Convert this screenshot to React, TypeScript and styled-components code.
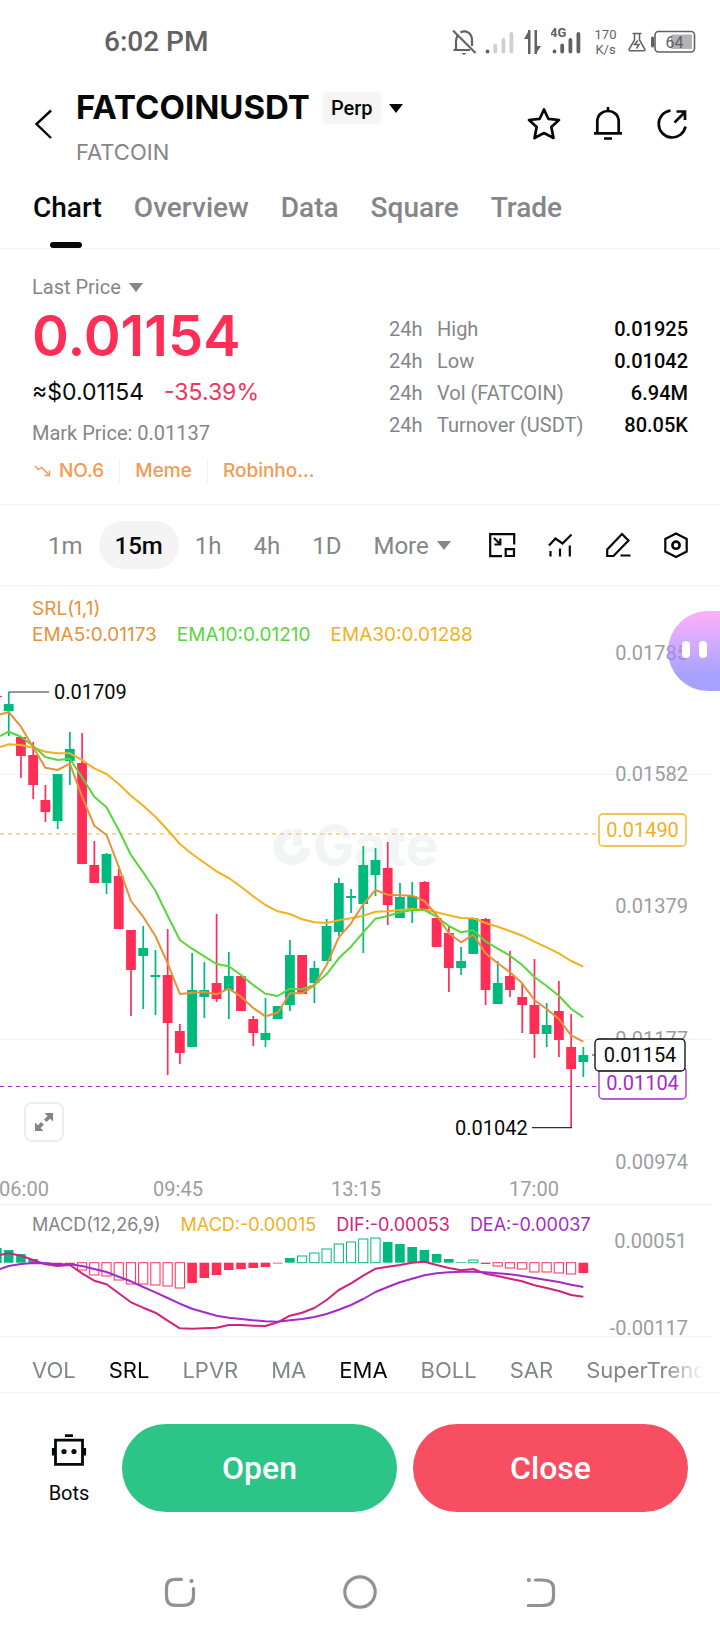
import React from "react";
import styled, { createGlobalStyle } from "styled-components";

const INK = "#070808";
const GREY = "#84868a";
const AXIS = "#9b9ea1";
const LINE = "#f0f1f2";
const RED = "#ff2e57";
const GREEN = "#00b97c";
const ORANGE = "#e8913a";
const LIME = "#58d63a";
const AMBER = "#f3b01f";
const PINK = "#d3227c";
const PURPLE = "#a52bc8";
const BRAND = 'Inter, "Liberation Sans", sans-serif';
const SYSTEM = 'Roboto, "Liberation Sans", sans-serif';

const GlobalStyle = createGlobalStyle`
  * { box-sizing: border-box; }
  body { margin: 0; background: #fff; color: ${INK}; font-family: ${SYSTEM}; }
  button { border: 0; padding: 0; background: none; color: inherit; font: inherit; cursor: pointer; }
  svg { display: block; }
`;

const Page = styled.div`
  display: flex;
  flex-direction: column;
  min-height: 100vh;
  overflow-x: hidden;
`;

/* status bar */
const StatusBar = styled.div`
  display: flex;
  align-items: center;
  justify-content: space-between;
  height: 80px;
  padding: 3px 24px 0 104px;
  color: #626262;
`;
const Clock = styled.span`
  font-size: 28px;
  font-weight: 500;
  line-height: 32px;
`;
const StatusIcons = styled.div<{ $gap: number }>`
  display: flex;
  align-items: center;
  gap: ${(p) => p.$gap}px;
`;
const Speed = styled.span`
  width: 29px;
  font-size: 13px;
  line-height: 15px;
  text-align: center;
`;

/* header */
const Header = styled.header`
  display: flex;
  align-items: center;
  height: 88px;
  padding: 0 30px 0 32px;
`;
const BackButton = styled.button`
  width: 44px;
  flex: none;
`;
const Heading = styled.div`
  flex: 1;
`;
const TitleRow = styled.div`
  display: flex;
  align-items: center;
  height: 48px;
  margin-bottom: 8px;
`;
const Title = styled.h1`
  margin: 0 13px 0 0;
  padding-bottom: 2px;
  font-family: ${BRAND};
  font-size: 33px;
  font-weight: 700;
  line-height: 46px;
`;
const Badge = styled.span`
  padding: 0 8px;
  border-radius: 4px;
  background: #f5f5f5;
  font-size: 20px;
  font-weight: 500;
  line-height: 32px;
`;
const Caret = styled.span<{ $color: string }>`
  display: inline-block;
  margin-left: 8px;
  border: 7px solid transparent;
  border-top: 9px solid ${(p) => p.$color};
  border-bottom: 0;
`;
const Subtitle = styled.div`
  color: ${GREY};
  font-family: ${BRAND};
  font-size: 22px;
  line-height: 24px;
`;
const HeaderActions = styled.div`
  display: flex;
  gap: 28px;
`;

/* tabs */
const Tabs = styled.nav`
  display: flex;
  gap: 32px;
  padding: 0 33px;
  border-bottom: 1px solid ${LINE};
`;
const Tab = styled.button<{ $active?: boolean }>`
  position: relative;
  height: 80px;
  padding-bottom: 2px;
  color: ${(p) => (p.$active ? INK : GREY)};
  font-size: 28px;
  font-weight: 500;
  &::after {
    content: "";
    display: ${(p) => (p.$active ? "block" : "none")};
    position: absolute;
    left: calc(50% - 17px);
    bottom: 0;
    width: 32px;
    height: 6px;
    border-radius: 3px;
    background: ${INK};
  }
`;

/* price summary */
const Summary = styled.section`
  display: flex;
  align-items: center;
  justify-content: space-between;
  padding: 26px 32px 21px;
  border-bottom: 1px solid ${LINE};
`;
const PriceKind = styled.button`
  display: flex;
  align-items: center;
  margin-bottom: 4px;
  color: ${GREY};
  font-size: 20px;
  line-height: 24px;
`;
const BigPrice = styled.div`
  margin-bottom: 8px;
  color: ${RED};
  font-family: ${BRAND};
  font-size: 56px;
  font-weight: 600;
  line-height: 66px;
`;
const PriceMeta = styled.div`
  display: flex;
  gap: 20px;
  margin-bottom: 10px;
  font-family: ${BRAND};
  font-size: 23px;
  line-height: 30px;
`;
const Change = styled.span`
  color: #ee3560;
`;
const MarkPrice = styled.div`
  margin-bottom: 12px;
  padding-top: 2px;
  color: ${GREY};
  font-size: 20px;
  line-height: 28px;
`;
const Tags = styled.div`
  display: flex;
  align-items: center;
  color: #f49a52;
  font-family: ${BRAND};
  font-size: 19px;
  font-weight: 500;
  line-height: 24px;
`;
const Tag = styled.a`
  display: flex;
  align-items: center;
  gap: 7px;
  color: inherit;
  text-decoration: none;
  & + & {
    margin-left: 15px;
    padding-left: 15px;
    border-left: 1px solid ${LINE};
  }
`;
const Stats = styled.table`
  width: 299px;
  margin-bottom: 4px;
  border-collapse: collapse;
  font-size: 20px;
  line-height: 32px;
`;
const StatHead = styled.th`
  padding: 0;
  color: ${GREY};
  font-weight: 400;
  text-align: left;
`;
const Period = styled.span`
  display: inline-block;
  width: 48px;
`;
const StatValue = styled.td`
  padding: 0;
  font-weight: 500;
  text-align: right;
`;

/* timeframes and chart tools */
const Toolbar = styled.div`
  display: flex;
  align-items: center;
  justify-content: space-between;
  height: 81px;
  padding: 0 30px 0 32px;
  border-bottom: 1px solid ${LINE};
`;
const Frames = styled.div`
  display: flex;
`;
const Frame = styled.button<{ $active?: boolean }>`
  display: flex;
  align-items: center;
  height: 48px;
  padding: 1px 16px 0;
  border-radius: 24px;
  background: ${(p) => (p.$active ? "#f4f4f4" : "none")};
  color: ${(p) => (p.$active ? INK : GREY)};
  font-size: 24px;
  font-weight: ${(p) => (p.$active ? 500 : 400)};
`;
const Tools = styled.div`
  display: flex;
  gap: 30px;
`;

/* charts */
const Pane = styled.section`
  position: relative;
`;
const Legend = styled.div<{ $top: number; $size: number }>`
  padding: ${(p) => p.$top}px 32px 0;
  font-family: ${BRAND};
  font-size: ${(p) => p.$size}px;
  line-height: 26px;
`;
const LegendRow = styled.div`
  display: flex;
  gap: 20px;
  white-space: nowrap;
`;
const LegendItem = styled.span<{ $color: string }>`
  color: ${(p) => p.$color};
`;
const Plot = styled.svg`
  width: 100%;
  height: auto;
  overflow: visible;
  font-family: ${SYSTEM};
  font-size: 20px;
`;
const ExpandButton = styled.button`
  position: absolute;
  left: 24px;
  bottom: 63px;
  display: grid;
  place-items: center;
  width: 40px;
  height: 40px;
  border: 2px solid #eeeeee;
  border-radius: 8px;
  background: #fff;
`;
const Assistant = styled.button`
  position: absolute;
  top: 25px;
  right: 0;
  display: flex;
  align-items: center;
  gap: 9px;
  width: 52px;
  height: 80px;
  padding: 0 0 3px 14px;
  border-radius: 40px 0 0 40px;
  background: linear-gradient(rgba(255, 142, 245, 0.7), rgba(186, 134, 255, 0.7) 45%, rgba(128, 122, 255, 0.7) 80%);
`;
const Eye = styled.span`
  width: 8px;
  height: 17px;
  border-radius: 4px;
  background: #fff;
`;

/* indicator picker */
const PickerFrame = styled.div`
  border-bottom: 1px solid ${LINE};
`;
const Indicators = styled.div`
  display: flex;
  gap: 33px;
  height: 55px;
  padding: 10px 0 0 32px;
  overflow: hidden;
  mask-image: linear-gradient(to right, #000 calc(100% - 56px), transparent calc(100% - 16px));
`;
const Indicator = styled.button<{ $active?: boolean }>`
  flex: none;
  color: ${(p) => (p.$active ? INK : GREY)};
  font-family: ${BRAND};
  font-size: 22px;
`;

/* order actions */
const Actions = styled.div`
  display: flex;
  gap: 16px;
  padding: 31px 32px 0 16px;
`;
const Bots = styled.button`
  display: flex;
  flex-direction: column;
  align-items: center;
  gap: 12px;
  width: 106px;
  margin-right: -16px;
  padding-top: 9px;
  font-size: 20px;
  line-height: 28px;
`;
const OrderButton = styled.button<{ $color: string }>`
  flex: 1;
  height: 88px;
  border-radius: 44px;
  background: ${(p) => p.$color};
  color: #fff;
  font-size: 32px;
  font-weight: 500;
`;
const SystemNav = styled.nav`
  display: grid;
  grid-template-columns: repeat(3, 1fr);
  place-items: center;
  margin-top: 56px;
  padding: 0 12.5%;
  height: 48px;
`;

/* chart data */
const X0 = 8.7;
const STEP = 12.226;
const cx = (i: number) => X0 + STEP * i;

type Candle = [0 | 1, number, number, number, number];
const candles: Candle[] = [
  [1, 692, 704, 711, 736], [0, 737, 737, 756, 778], [0, 742, 755, 785, 799], [0, 785, 800, 812, 822],
  [1, 774, 774, 821, 829], [1, 732, 749, 761, 785], [0, 733, 763, 864, 864], [0, 841, 865, 883, 883],
  [1, 853, 854, 883, 894], [0, 869, 876, 929, 929], [0, 930, 930, 970, 1016], [1, 926, 948, 956, 1009],
  [1, 950, 975, 977, 1015], [0, 929, 975, 1023, 1075], [0, 1024, 1031, 1053, 1064], [1, 953, 990, 1047, 1047],
  [1, 962, 990, 997, 1018], [0, 914, 983, 999, 1002], [1, 952, 976, 990, 1019], [0, 976, 976, 1011, 1011],
  [0, 1016, 1019, 1033, 1046], [1, 998, 1033, 1040, 1047], [1, 1006, 1006, 1019, 1019], [1, 940, 955, 1005, 1011],
  [0, 955, 955, 994, 994], [1, 961, 968, 983, 1003], [1, 919, 926, 961, 961], [1, 878, 883, 932, 936],
  [1, 889, 896, 898, 913], [1, 846, 865, 904, 953], [1, 848, 860, 875, 896], [0, 842, 868, 905, 925],
  [1, 883, 897, 918, 918], [1, 882, 896, 909, 923], [0, 881, 882, 909, 909], [0, 918, 918, 947, 947],
  [0, 926, 933, 968, 992], [1, 947, 961, 968, 975], [1, 918, 918, 954, 954], [0, 918, 919, 990, 1005],
  [1, 961, 983, 1004, 1004], [0, 951, 976, 990, 997], [0, 983, 997, 1005, 1033], [0, 959, 1005, 1034, 1058],
  [1, 1003, 1025, 1034, 1047], [0, 981, 1011, 1040, 1057], [0, 1014, 1047, 1069, 1128], [1, 1047, 1055, 1062, 1077],
];

const ema5 = [712, 726.7, 747.3, 767.7, 770, 763.7, 796.7, 825.7, 835, 866.7, 901, 916.7, 936, 963.3, 994, 992.7, 992, 994.3, 988.7, 996.7, 1008, 1016.3, 1012.7, 993.3, 993.3, 985.3, 965, 937.3, 923.3, 904.3, 890, 894.7, 895.3, 895.7, 901, 915, 933.3, 942.3, 934.7, 953.3, 963.3, 972.3, 983.3, 1000, 1009, 1019, 1035.3, 1041.7];
const ema10 = [731.7, 736.7, 746, 757, 760, 758.7, 777.3, 796.7, 807.3, 830, 855, 872.3, 890.7, 915.7, 940, 948.7, 956.3, 964, 966.3, 975, 985, 993.7, 996, 988.7, 989.3, 985, 974.3, 958.3, 946.7, 932.3, 918.7, 916, 912.3, 910, 910, 916.7, 926, 932.3, 930.3, 941.3, 948.7, 955.7, 965, 977, 986, 995.7, 1008.7, 1017.3];
const ema30 = [744.3, 745, 747.7, 751.7, 753.3, 753.3, 760, 768.3, 774, 784, 795.7, 805.7, 816.7, 830, 844, 854, 862.7, 871.3, 878, 886.7, 896.3, 905, 911.3, 914, 919.3, 922.3, 923, 920.3, 918.3, 915.7, 911.7, 911.3, 910, 909, 909.7, 912.3, 915.3, 918, 918.3, 923, 926.7, 931, 935.7, 941.7, 947.3, 953.3, 961, 966.7];

const ZERO = 1262.7;
/* each bar: far edge from the zero line, filled or hollow */
const bars: [number, 0 | 1][] = [
  [1250, 1], [1254, 1], [1259, 1], [1262, 1], [1264, 1], [1264, 1], [1270, 0], [1275, 0], [1276, 0], [1280, 0], [1284, 0], [1284, 0],
  [1285, 0], [1286, 0], [1288, 0], [1283, 1], [1278, 1], [1275, 1], [1270, 1], [1269, 1], [1268, 1], [1267, 1], [1263.5, 1], [1258, 1],
  [1256, 0], [1253, 0], [1249, 0], [1244, 0], [1242, 0], [1239, 0], [1238, 0], [1242, 1], [1244, 1], [1247, 1], [1250, 1], [1254, 1],
  [1259, 1], [1262, 1], [1260, 0], [1264, 1], [1266, 0], [1268, 0], [1269, 0], [1272, 0], [1272, 0], [1273, 0], [1274, 0], [1273, 1],
];
const dif = [1253.3, 1255.7, 1260, 1264.3, 1266, 1265, 1273.3, 1280.7, 1284.3, 1293.3, 1302.3, 1307.7, 1312.7, 1320.7, 1328.3, 1328.7, 1328.3, 1327.7, 1325, 1325, 1325.7, 1326, 1322.3, 1315.7, 1312.7, 1308, 1300, 1290, 1283.3, 1275.7, 1268.7, 1266.7, 1265, 1262.7, 1261.7, 1265, 1268, 1270.3, 1269, 1273.7, 1276, 1278.7, 1281.3, 1285.3, 1288, 1291, 1295, 1296.7];
const dea = [1266, 1264, 1263, 1263.3, 1264.3, 1264.3, 1266, 1269, 1272, 1276.7, 1281.3, 1287, 1292.3, 1298, 1303.7, 1308.7, 1312.3, 1315.7, 1317.7, 1319, 1320.3, 1321.3, 1321.7, 1320.3, 1319, 1317, 1314, 1309.7, 1305, 1299, 1292, 1287, 1282.3, 1278.7, 1275.3, 1273.3, 1272.3, 1271.7, 1271.7, 1272.3, 1273.3, 1274.3, 1276, 1278, 1280, 1282, 1284.7, 1287];

function Curve({ start, data, color }: { start: number; data: number[]; color: string }) {
  const points = [`0,${start}`, ...data.map((y, i) => `${cx(i)},${y}`)].join(" ");
  return <polyline points={points} fill="none" stroke={color} strokeWidth={2} strokeLinejoin="round" />;
}

function Watermark() {
  return (
    <g fill="#f3f4f5">
      <path d="M291 833.500A13.500 13.500 0 1 0 305.500 848" fill="none" stroke="#f3f4f5" strokeWidth={10} />
      <rect x={293} y={829} width={9} height={17} />
      <text x={313} y={865} fontFamily={BRAND} fontSize={55} fontWeight={700}>Gate</text>
    </g>
  );
}

function PriceFlag({ x, y, width, color, children }: { x: number; y: number; width: number; color: string; children: string }) {
  return (
    <g>
      <rect x={x} y={y} width={width} height={32} rx={4} fill="#fff" stroke={color} strokeWidth={1.3} />
      <text x={x + width / 2} y={y + 23} textAnchor="middle" fill={color}>{children}</text>
    </g>
  );
}

function CandleChart() {
  return (
    <Plot viewBox="0 648 720 557" role="img" aria-label="FATCOINUSDT 15 minute candles">
      <path d="M0 774.5H712M0 1039.5H712" stroke={LINE} />
      <Watermark />
      <g fill={AXIS} textAnchor="end">
        <text x={688} y={660}>0.01785</text>
        <text x={688} y={781}>0.01582</text>
        <text x={688} y={913}>0.01379</text>
        <text x={688} y={1046}>0.01177</text>
        <text x={688} y={1169}>0.00974</text>
      </g>
      <g fill={AXIS} textAnchor="middle">
        <text x={24} y={1196}>06:00</text>
        <text x={178} y={1196}>09:45</text>
        <text x={356} y={1196}>13:15</text>
        <text x={534} y={1196}>17:00</text>
      </g>
      <path d="M0 834H598" stroke="#f3cf74" strokeWidth={1.6} strokeDasharray="4 4" />
      <path d="M0 1086.5H598" stroke={PURPLE} strokeWidth={1.2} strokeDasharray="4 4" />
      <path d="M0 696.5H2" stroke={RED} />
      {candles.map(([up, high, top, bottom, low], i) => (
        <g key={i} fill={up ? GREEN : RED}>
          <rect x={cx(i) - 0.8} y={high} width={1.7} height={low - high} />
          <rect x={cx(i) - 4.9} y={top} width={9.8} height={bottom - top} />
        </g>
      ))}
      <Curve start={747} data={ema30} color={AMBER} />
      <Curve start={736} data={ema10} color={LIME} />
      <Curve start={714.5} data={ema5} color={ORANGE} />
      <path d="M8.7 692H49M532 1127.7H572M592 1055H595" stroke="#333" strokeWidth={1.2} />
      <g fill={INK}>
        <text x={54} y={699}>0.01709</text>
        <text x={455} y={1135}>0.01042</text>
      </g>
      <PriceFlag x={599} y={814} width={87} color={AMBER}>0.01490</PriceFlag>
      <PriceFlag x={599} y={1067} width={87} color={PURPLE}>0.01104</PriceFlag>
      <PriceFlag x={595} y={1039} width={90} color={INK}>0.01154</PriceFlag>
      <path d="M0 1204.5H712" stroke={LINE} />
    </Plot>
  );
}

function MacdChart() {
  return (
    <Plot viewBox="0 1238 720 99" role="img" aria-label="MACD">
      <g fill={AXIS} textAnchor="end">
        <text x={687} y={1248}>0.00051</text>
        <text x={688} y={1335}>-0.00117</text>
      </g>
      <rect x={0} y={1248} width={1.6} height={15} fill={GREEN} />
      {bars.map(([edge, solid], i) => {
        const color = edge < ZERO ? GREEN : RED;
        const top = Math.min(edge, ZERO);
        const height = Math.abs(edge - ZERO);
        return solid ? (
          <rect key={i} x={cx(i) - 4.8} y={top} width={9.6} height={height} fill={color} />
        ) : (
          <rect key={i} x={cx(i) - 4.6} y={top} width={9.2} height={height} fill="#fff" stroke={color} strokeWidth={1} />
        );
      })}
      <Curve start={1255} data={dif} color={PINK} />
      <Curve start={1269} data={dea} color={PURPLE} />
      <path d="M0 1336.5H712" stroke={LINE} />
    </Plot>
  );
}

/* icons */
const BellOff = () => (
  <svg width="26" height="28" viewBox="0 0 26 28" fill="none" stroke="#626262" strokeWidth="2.200">
    <path d="M5 21V13C5 11 5.500 9 7 7M9.500 4.500C15 1.500 21 5.500 21 12V18M2.500 22H19" />
    <path d="M2 2.500L24.500 25" />
    <path d="M10.500 25H15.500L13 27Z" fill="#626262" stroke="none" />
  </svg>
);
const Bars = ({ weak }: { weak?: boolean }) => (
  <g stroke={weak ? "#d0d0d0" : "#626262"} strokeWidth="3.800" strokeLinecap="round">
    <path d="M3.500 23.500V23.600" stroke="#626262" />
    <path d="M11.200 17.500V23.500M19.400 12V23.500M27.400 6V23.500" />
  </g>
);
const SignalWeak = () => (
  <svg width="30" height="28" viewBox="0 0 30 28"><g transform="translate(-1 0)"><Bars weak /></g></svg>
);
const Transfer = () => (
  <svg width="20" height="28" viewBox="0 0 20 28" fill="#626262">
    <path d="M7.500 2V26H5V11H1L5 4V2ZM11.500 26V2H14V18H18L14 24V26Z" />
  </svg>
);
const Signal4G = () => (
  <svg width="32" height="32" viewBox="0 0 32 32">
    <text x="-1" y="11" fontFamily={SYSTEM} fontSize="13" fontWeight="700" fill="#626262">4G</text>
    <g transform="translate(0 2)"><Bars /></g>
  </svg>
);
const Flask = () => (
  <svg width="18" height="20" viewBox="0 0 18 20" fill="none" stroke="#626262" strokeWidth="1.500">
    <path d="M4.500 1.500H13.500M6.500 1.500V8L1 17.500Q1 18.800 2 18.800H16Q17 18.800 17 17.500L11.500 8V1.500" />
    <path d="M9.800 8.500L6.500 12.500H11L8.500 16.500" strokeWidth="1.500" />
  </svg>
);
const Battery = () => (
  <svg width="46" height="24" viewBox="0 0 46 24">
    <path d="M2.500 8V16" stroke="#626262" strokeWidth="3" strokeLinecap="round" />
    <rect x="5" y="1.500" width="39.500" height="20.500" rx="3.500" fill="#fff" stroke="#626262" strokeWidth="1.600" />
    <rect x="21" y="4.500" width="21" height="14.500" rx="1" fill="#b3b3b3" />
    <text x="24.500" y="17.500" textAnchor="middle" fontFamily={SYSTEM} fontSize="16" fill="#626262">64</text>
  </svg>
);
const BackIcon = () => (
  <svg width="24" height="32" viewBox="0 0 24 32" fill="none" stroke={INK} strokeWidth="2.400">
    <path d="M19 2.500L4.500 16L19 30" />
  </svg>
);
const StarIcon = () => (
  <svg width="36" height="36" viewBox="0 0 36 36" fill="none" stroke={INK} strokeWidth="2.700" strokeLinejoin="round">
    <path d="M18 3.500L22.300 12.800L33 14L25.300 21L27.500 32L18 27L8.500 32L10.700 21L3 14L13.700 12.800Z" />
  </svg>
);
const BellIcon = () => (
  <svg width="36" height="36" viewBox="0 0 36 36" fill="none" stroke={INK} strokeWidth="2.700">
    <path d="M7.300 27V15.500C7.300 1.500 28.700 1.500 28.700 15.500V27M4 27.300H32M18 1V5.500M14 32.500H22" />
  </svg>
);
const ShareIcon = () => (
  <svg width="36" height="36" viewBox="0 0 36 36" fill="none" stroke={INK} strokeWidth="2.700">
    <path d="M16.500 4.600A13.500 13.500 0 1 0 31.500 20.500" />
    <path d="M20.500 16.500L30.500 6.500M22.500 5.500H31V14" />
  </svg>
);
const TrendDown = () => (
  <svg width="20" height="16" viewBox="0 0 20 16" fill="none" stroke="#f49a52" strokeWidth="1.500">
    <path d="M3 3L6.500 6.500L9.500 4.500L17 12M17.500 7.500V12.500H12.500" />
  </svg>
);
const PipIcon = () => (
  <svg width="28" height="28" viewBox="0 0 28 28" fill="none" stroke={INK} strokeWidth="2.200">
    <path d="M14 25.200H2.200V3.200H26.200V13.500M17.700 18.200H26V25H17.700Z" />
    <path d="M6 7L11 12M12.300 7.500V13.500H6.500" />
  </svg>
);
const IndicatorIcon = () => (
  <svg width="28" height="28" viewBox="0 0 28 28" fill="none" stroke={INK} strokeWidth="2.200">
    <path d="M3 14.500L9.500 7.500L16.500 12.500L25.500 3.500M4.500 20V25.500M14 17.500V25.500M23.800 14.500V25.500" />
  </svg>
);
const PencilIcon = () => (
  <svg width="28" height="28" viewBox="0 0 28 28" fill="none" stroke={INK} strokeWidth="2.200">
    <path d="M3.200 18.500L18 3L24.500 9.500L9.500 25H3.200ZM16.500 24.500H26.500" />
  </svg>
);
const HexIcon = () => (
  <svg width="28" height="28" viewBox="0 0 28 28" fill="none" stroke={INK} strokeWidth="2.200">
    <path d="M14 2.500L24.700 8V20.500L14 26L3.300 20.500V8Z" />
    <circle cx="14" cy="14.200" r="3.600" strokeWidth="2.600" />
  </svg>
);
const ExpandIcon = () => (
  <svg width="20" height="20" viewBox="0 0 20 20" fill="#858585">
    <path d="M10.500 1H19V9.500L16 6.700L12.500 10L10 7.500L13.500 4ZM9.500 19H1V10.500L4 13.300L7 10L10 12.500L6.500 16Z" />
  </svg>
);
const BotIcon = () => (
  <svg width="36" height="34" viewBox="0 0 36 34" fill="none" stroke={INK} strokeWidth="2.800">
    <path d="M4.500 7.200H31.500V31.300H4.500ZM14 2.600H22M2.300 15V22.500M33.700 15V22.500" />
    <circle cx="13" cy="18.500" r="2.600" fill={INK} stroke="none" />
    <circle cx="23" cy="18.500" r="2.600" fill={INK} stroke="none" />
  </svg>
);
const NavRecent = () => (
  <svg width="36" height="36" viewBox="0 0 36 36" fill="none" stroke="#929292" strokeWidth="3.200" strokeLinecap="round">
    <path d="M19.500 5.300H13C7 5.300 4.500 8 4.500 14V22C4.500 28 7 31.300 13 31.300H21C28 31.300 31.500 28 31.500 22V14.500" />
    <path d="M29.500 7V7.100" strokeWidth="4.200" />
  </svg>
);
const NavHome = () => (
  <svg width="36" height="36" viewBox="0 0 36 36" fill="none" stroke="#929292" strokeWidth="3.200">
    <circle cx="18" cy="18" r="15.200" />
  </svg>
);
const NavBack = () => (
  <svg width="36" height="36" viewBox="0 0 36 36" fill="none" stroke="#929292" strokeWidth="3.200" strokeLinecap="round">
    <path d="M13.500 6H19C28 6 31.500 9 31.500 14V23C31.500 28 28 31.500 20 31.500H6.300" />
    <path d="M6.800 6V6.100" strokeWidth="4.200" />
  </svg>
);

const stats = [
  ["High", "0.01925"],
  ["Low", "0.01042"],
  ["Vol (FATCOIN)", "6.94M"],
  ["Turnover (USDT)", "80.05K"],
];
const indicators = ["VOL", "SRL", "LPVR", "MA", "EMA", "BOLL", "SAR", "SuperTrend"];
const activeIndicators = ["SRL", "EMA"];

export default function App() {
  return (
    <Page>
      <GlobalStyle />
      <StatusBar>
        <Clock>6:02 PM</Clock>
        <StatusIcons $gap={8}>
          <BellOff />
          <SignalWeak />
          <Transfer />
          <Signal4G />
          <Speed>170 K/s</Speed>
          <StatusIcons $gap={4}>
            <Flask />
            <Battery />
          </StatusIcons>
        </StatusIcons>
      </StatusBar>

      <Header>
        <BackButton aria-label="Back"><BackIcon /></BackButton>
        <Heading>
          <TitleRow>
            <Title>FATCOINUSDT</Title>
            <Badge>Perp</Badge>
            <Caret $color={INK} />
          </TitleRow>
          <Subtitle>FATCOIN</Subtitle>
        </Heading>
        <HeaderActions>
          <button aria-label="Favourite"><StarIcon /></button>
          <button aria-label="Alerts"><BellIcon /></button>
          <button aria-label="Share"><ShareIcon /></button>
        </HeaderActions>
      </Header>

      <Tabs>
        {["Chart", "Overview", "Data", "Square", "Trade"].map((name) => (
          <Tab key={name} $active={name === "Chart"}>{name}</Tab>
        ))}
      </Tabs>

      <Summary>
        <div>
          <PriceKind>Last Price<Caret $color={GREY} /></PriceKind>
          <BigPrice>0.01154</BigPrice>
          <PriceMeta>
            <span>≈$0.01154</span>
            <Change>-35.39%</Change>
          </PriceMeta>
          <MarkPrice>Mark Price: 0.01137</MarkPrice>
          <Tags>
            <Tag href="#rank"><TrendDown />NO.6</Tag>
            <Tag href="#meme">Meme</Tag>
            <Tag href="#robinhood">Robinho...</Tag>
          </Tags>
        </div>
        <Stats>
          <tbody>
            {stats.map(([label, value]) => (
              <tr key={label}>
                <StatHead scope="row"><Period>24h</Period>{label}</StatHead>
                <StatValue>{value}</StatValue>
              </tr>
            ))}
          </tbody>
        </Stats>
      </Summary>

      <Toolbar>
        <Frames>
          {["1m", "15m", "1h", "4h", "1D"].map((name) => (
            <Frame key={name} $active={name === "15m"}>{name}</Frame>
          ))}
          <Frame>More<Caret $color={GREY} /></Frame>
        </Frames>
        <Tools>
          <button aria-label="Floating window"><PipIcon /></button>
          <button aria-label="Indicators"><IndicatorIcon /></button>
          <button aria-label="Draw"><PencilIcon /></button>
          <button aria-label="Chart settings"><HexIcon /></button>
        </Tools>
      </Toolbar>

      <Pane>
        <Legend $top={10} $size={19}>
          <LegendItem $color={ORANGE}>SRL(1,1)</LegendItem>
          <LegendRow>
            <LegendItem $color={ORANGE}>EMA5:0.01173</LegendItem>
            <LegendItem $color={LIME}>EMA10:0.01210</LegendItem>
            <LegendItem $color={AMBER}>EMA30:0.01288</LegendItem>
          </LegendRow>
        </Legend>
        <CandleChart />
        <ExpandButton aria-label="Expand chart"><ExpandIcon /></ExpandButton>
        <Assistant aria-label="Assistant"><Eye /><Eye /></Assistant>
      </Pane>

      <Pane>
        <Legend $top={7} $size={18}>
          <LegendRow>
            <LegendItem $color={GREY}>MACD(12,26,9)</LegendItem>
            <LegendItem $color={AMBER}>MACD:-0.00015</LegendItem>
            <LegendItem $color={PINK}>DIF:-0.00053</LegendItem>
            <LegendItem $color={PURPLE}>DEA:-0.00037</LegendItem>
          </LegendRow>
        </Legend>
        <MacdChart />
      </Pane>

      <PickerFrame>
        <Indicators>
          {indicators.map((name) => (
            <Indicator key={name} $active={activeIndicators.includes(name)}>{name}</Indicator>
          ))}
        </Indicators>
      </PickerFrame>

      <Actions>
        <Bots><BotIcon />Bots</Bots>
        <OrderButton $color="#2dc487">Open</OrderButton>
        <OrderButton $color="#f84e61">Close</OrderButton>
      </Actions>

      <SystemNav>
        <button aria-label="Recent apps"><NavRecent /></button>
        <button aria-label="Home"><NavHome /></button>
        <button aria-label="Back one screen"><NavBack /></button>
      </SystemNav>
    </Page>
  );
}
